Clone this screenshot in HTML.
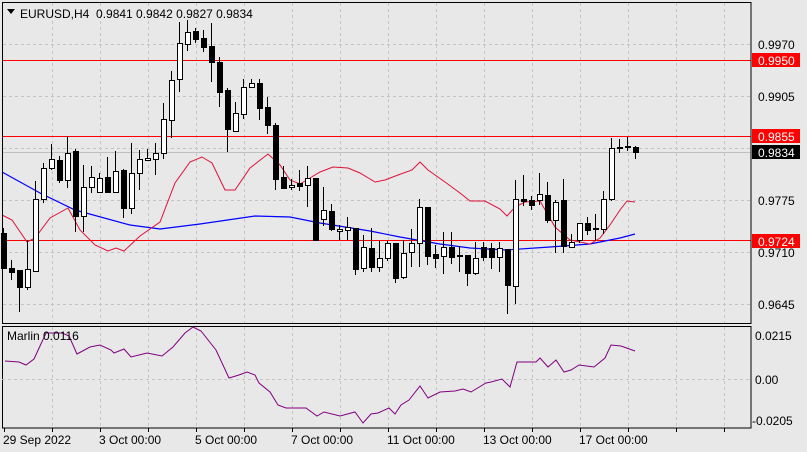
<!DOCTYPE html>
<html><head><meta charset="utf-8"><style>
body{margin:0;background:#e8e8e8;width:807px;height:452px;overflow:hidden;font-family:"Liberation Sans",sans-serif}
svg{display:block}
text{font-family:"Liberation Sans",sans-serif;font-size:12px}
</style></head><body>
<svg id="s" width="807" height="452" xmlns="http://www.w3.org/2000/svg">
<rect width="807" height="452" fill="#e8e8e8"/>
<g id="grid" stroke="#c4c4c4" stroke-dasharray="3,3" stroke-width="1"></g>
<line x1="2" y1="60.5" x2="751" y2="60.5" stroke="#f00"/>
<line x1="2" y1="136.5" x2="751" y2="136.5" stroke="#f00"/>
<line x1="2" y1="152.5" x2="751" y2="152.5" stroke="#c0c0c0"/>
<line x1="2" y1="240.5" x2="751" y2="240.5" stroke="#f00"/>
<polyline fill="none" stroke="#00f" stroke-width="1.2" points="2,172 40,193 75,210 130,225 160,229 200,224 255,216 290,217 320,223 370,231 400,237 440,244 470,248 505,250 550,247 590,244 620,238 635,234"/>
<polyline fill="none" stroke="#e0103a" stroke-width="1" points="2,215 12,220 27,242 35,238 50,218 68,208 80,230 95,245 108,251 116,248 124,251 140,236 160,222 175,183 190,162 202,157 212,163 225,190 235,190 250,168 268,154 280,165 290,180 300,184 310,178 320,172 333,167 348,168 360,173 375,182 385,180 398,175 412,170 420,162 428,170 445,182 460,193 470,201 485,201 500,209 507,216 515,207 525,202 540,201 555,227 570,240 590,244 600,238 610,225 620,210 627,201 635,202"/>
<g id="c"></g>
<rect x="2.5" y="2.5" width="748.5" height="321" fill="none" stroke="#000"/>
<rect x="2.5" y="326.5" width="748.5" height="101.5" fill="none" stroke="#000"/>
<line x1="2" y1="379.5" x2="751" y2="379.5" stroke="#c4c4c4" stroke-dasharray="3,3"/>
<polyline fill="none" stroke="#800080" stroke-width="1" points="5,361 19,362 26,365 34,359 46,333 62,333 69,336 77,354 90,347 100,345 111,350 114,353 124,349 131,357 139,355 147,353 162,356 173,347 185,333 193,327 201,331 216,350 229,378 239,375 247,372 255,375 259,383 270,392 278,405 286,408 306,408 317,416 324,412 340,416 355,412 363,423 371,414 378,413 389,408 395,414 401,405 409,400 420,386 428,398 440,392 455,391 463,389 471,392 486,383 491,382 502,379 510,387 517,362 536,362 540,358 548,367 556,360 564,372 571,370 579,365 594,367 605,358 611,345 621,346 635,351"/>
<polygon points="7,9 15,9 11,14" fill="#000"/>
<text x="20" y="18" fill="#000">EURUSD,H4&#160;&#160;0.9841 0.9842 0.9827 0.9834</text>
<text x="7" y="340" fill="#000" font-size="11">Marlin 0.0116</text>
<g fill="#000">
<text x="758" y="49">0.9970</text>
<text x="758" y="101">0.9905</text>
<text x="758" y="205">0.9775</text>
<text x="758" y="257">0.9710</text>
<text x="758" y="309">0.9645</text>
<text x="755" y="340">0.0215</text>
<text x="755" y="384">0.00</text>
<text x="752" y="425">-0.0205</text>
</g>
<rect x="752" y="53" width="48" height="14" fill="#f00"/><text x="758" y="65" fill="#fff">0.9950</text>
<rect x="752" y="129" width="48" height="14" fill="#f00"/><text x="758" y="141" fill="#fff">0.9855</text>
<rect x="752" y="145" width="48" height="14" fill="#000"/><text x="758" y="157" fill="#fff">0.9834</text>
<rect x="752" y="234" width="48" height="14" fill="#f00"/><text x="758" y="246" fill="#fff">0.9724</text>
<g fill="#000">
<text x="3" y="444">29 Sep 2022</text>
<text x="99" y="444">3 Oct 00:00</text>
<text x="195" y="444">5 Oct 00:00</text>
<text x="291" y="444">7 Oct 00:00</text>
<text x="387" y="444">11 Oct 00:00</text>
<text x="483" y="444">13 Oct 00:00</text>
<text x="579" y="444">17 Oct 00:00</text>
</g>
</svg>
<script>
var ns="http://www.w3.org/2000/svg";
function el(p,t,a){var e=document.createElementNS(ns,t);for(var k in a)e.setAttribute(k,a[k]);p.appendChild(e);return e;}
var g=document.getElementById('grid');
for(var x=52;x<751;x+=48){el(g,'line',{x1:x+.5,y1:3,x2:x+.5,y2:323});el(g,'line',{x1:x+.5,y1:327,x2:x+.5,y2:428});}
[44,96,148,200,252,304].forEach(function(y){el(g,'line',{x1:3,y1:y+.5,x2:751,y2:y+.5});});
var s=document.getElementById('s');
for(var x=4;x<751;x+=48){el(s,'line',{x1:x+.5,y1:428,x2:x+.5,y2:432,stroke:'#000'});}
// [bodyTop,bodyBot,wickTop,wickBot,white]
var C=[[233,268,228,268,0],[268,272,260,280,0],[270,287,270,312,0],[269,287,240,290,1],[199,271,181,271,1],[168,199,163,203,1],[159,168,144,170,1],[160,180,156,183,0],[153,180,136,188,1],[151,216,149,232,0],[187,216,165,232,1],[177,187,166,193,1],[178,192,173,192,1],[177,192,157,192,0],[171,192,151,192,1],[170,208,169,218,0],[173,208,143,214,1],[159,173,150,190,1],[158,160,149,161,1],[153,159,143,175,1],[119,153,103,159,1],[80,120,71,138,1],[43,79,22,92,1],[32,44,20,51,1],[31,39,28,43,0],[38,47,30,52,0],[46,62,23,82,0],[62,92,57,107,0],[90,129,88,152,0],[113,131,102,131,1],[87,114,79,119,1],[83,87,79,88,1],[83,108,79,120,0],[107,125,97,134,0],[125,179,123,190,0],[177,188,166,188,0],[185,187,179,190,1],[183,186,170,191,0],[178,185,166,207,1],[178,240,178,240,0],[210,219,187,226,1],[211,229,204,231,0],[229,231,225,240,1],[227,230,217,240,1],[228,269,228,275,0],[247,268,235,272,1],[248,267,228,272,0],[258,267,241,272,1],[243,258,241,261,1],[243,278,243,283,0],[253,277,240,279,1],[243,252,229,267,1],[207,243,199,267,1],[207,256,207,265,0],[254,258,245,268,0],[247,256,232,274,1],[247,257,232,264,0],[255,256,246,272,0],[255,273,255,286,0],[258,273,242,275,1],[247,257,242,261,0],[248,257,243,269,0],[248,257,242,272,1],[249,285,249,314,0],[199,286,180,304,1],[199,201,175,206,0],[200,205,196,210,0],[194,200,173,205,1],[195,220,182,223,0],[202,220,200,253,1],[200,246,179,253,0],[242,247,234,247,1],[223,240,223,243,1],[223,230,217,235,0],[228,229,214,241,0],[199,229,191,234,1],[148,199,138,201,1],[147,148,139,153,0],[146,147,137,151,0],[147,152,146,159,0]];
var cg=document.getElementById('c');
C.forEach(function(c,i){var x=3+8*i;
el(cg,'line',{x1:x+.5,y1:c[2],x2:x+.5,y2:c[3],stroke:'#000'});
var h=Math.max(c[1]-c[0],1);
el(cg,'rect',{x:x-2+.5,y:c[0]+.5,width:5,height:h,fill:c[4]?'#fff':'#000',stroke:'#000'});});
</script>
</body></html>
